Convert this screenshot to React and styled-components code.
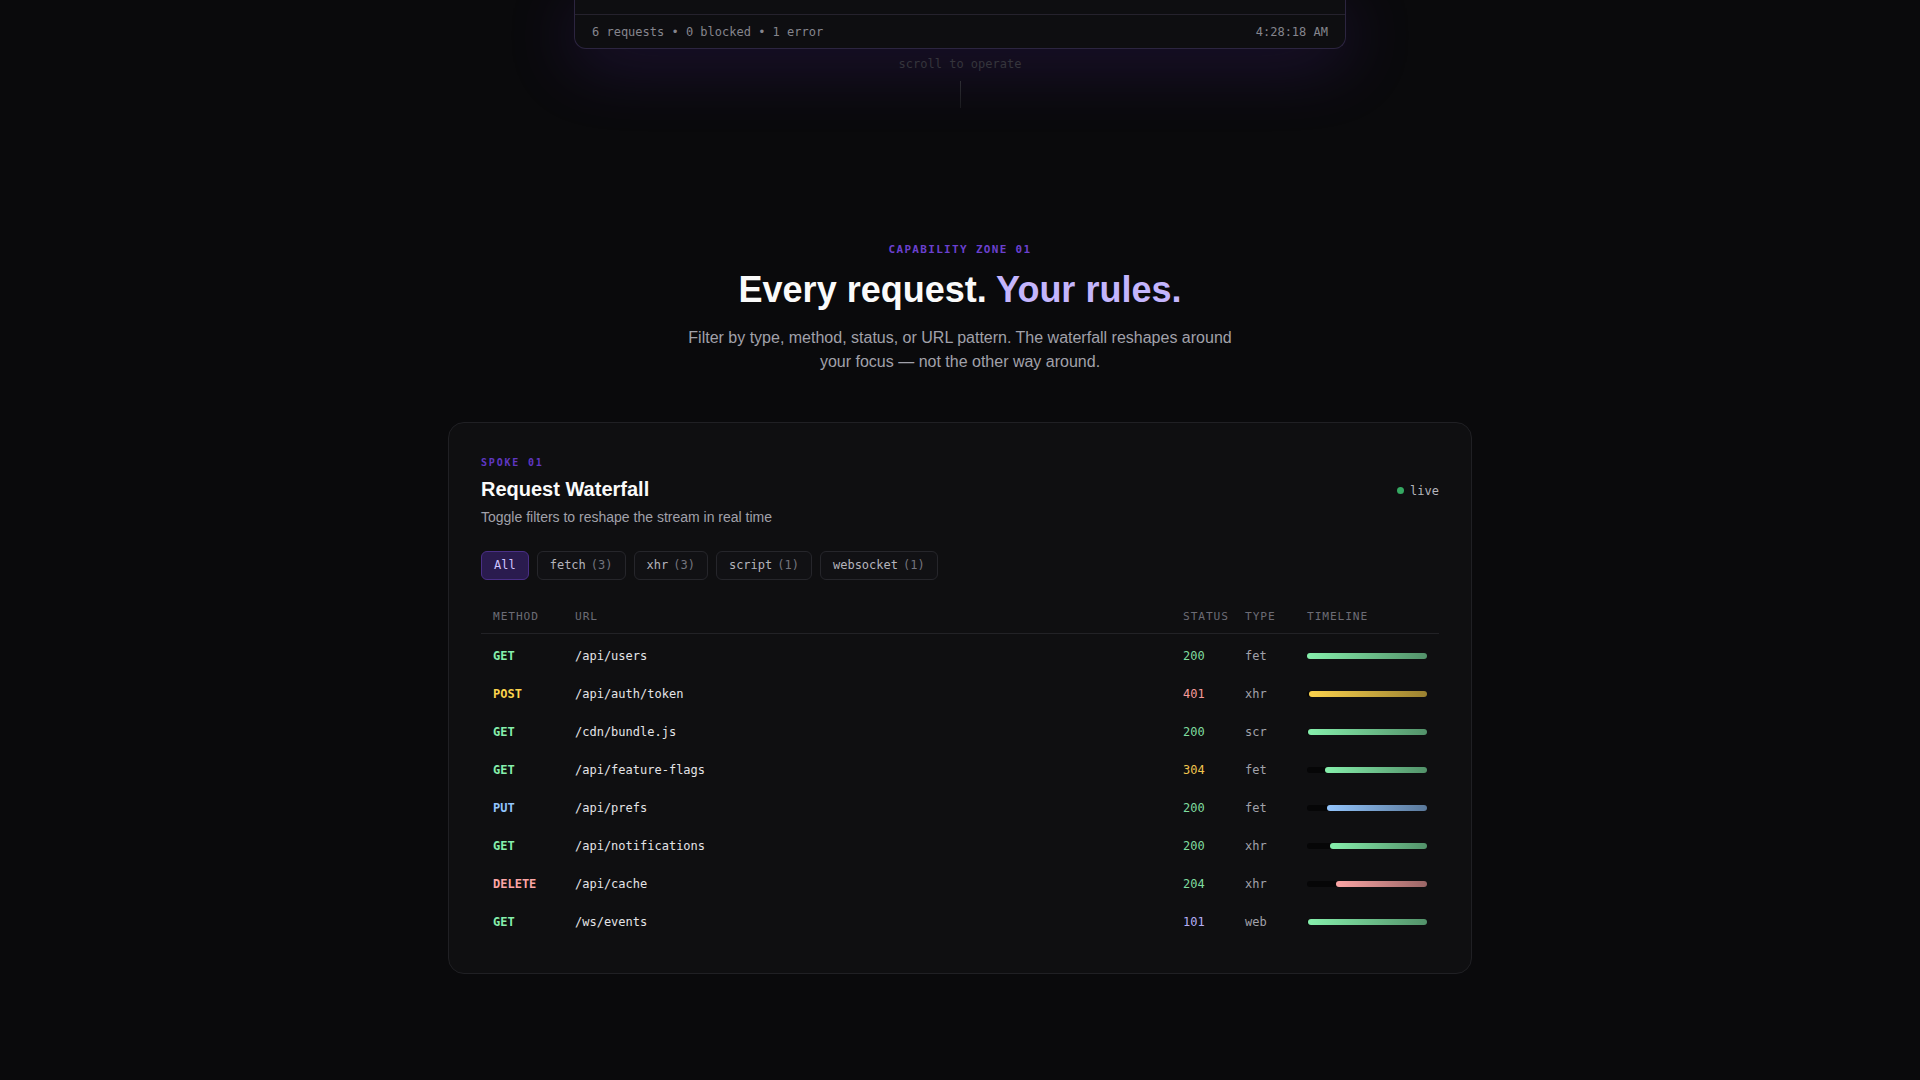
import React from 'react'
import styled, { createGlobalStyle } from 'styled-components'

const mono = `"DejaVu Sans Mono", "Liberation Mono", monospace`
const sans = `"Liberation Sans", Arial, sans-serif`

const methodColors = {
    GET: '#86efac',
    POST: '#fcd34d',
    PUT: '#93c5fd',
    DELETE: '#fca5a5',
}

const statusColor = (code) => {
    if (code >= 400) return '#f59a9a'
    if (code >= 300) return '#f1c54e'
    if (code >= 200) return '#7fdc9f'
    return '#b4aef5'
}

const requests = [
    { method: 'GET', url: '/api/users', status: 200, type: 'fet', start: 0 },
    { method: 'POST', url: '/api/auth/token', status: 401, type: 'xhr', start: 1.6 },
    { method: 'GET', url: '/cdn/bundle.js', status: 200, type: 'scr', start: 0.8 },
    { method: 'GET', url: '/api/feature-flags', status: 304, type: 'fet', start: 15 },
    { method: 'PUT', url: '/api/prefs', status: 200, type: 'fet', start: 17 },
    { method: 'GET', url: '/api/notifications', status: 200, type: 'xhr', start: 19.5 },
    { method: 'DELETE', url: '/api/cache', status: 204, type: 'xhr', start: 24 },
    { method: 'GET', url: '/ws/events', status: 101, type: 'web', start: 0.8 },
]

const filters = [
    { label: 'All', active: true },
    { label: 'fetch', count: 3 },
    { label: 'xhr', count: 3 },
    { label: 'script', count: 1 },
    { label: 'websocket', count: 1 },
]

// capability zone section under the console preview
function App() {
    return (
        <>
            <GlobalStyle />
            <Page>
                <Console>
                    <ConsoleBody />
                    <ConsoleFooter>
                        <span>6 requests • 0 blocked • 1 error</span>
                        <span>4:28:18 AM</span>
                    </ConsoleFooter>
                </Console>
                <ScrollHint>scroll to operate</ScrollHint>
                <ScrollLine />

                <Eyebrow>CAPABILITY ZONE 01</Eyebrow>
                <Heading>
                    Every request. <Accent>Your rules.</Accent>
                </Heading>
                <Lead>
                    Filter by type, method, status, or URL pattern. The waterfall reshapes around
                    your focus — not the other way around.
                </Lead>

                <Card>
                    <CardHeader>
                        <div>
                            <Spoke>SPOKE 01</Spoke>
                            <CardTitle>Request Waterfall</CardTitle>
                            <CardText>Toggle filters to reshape the stream in real time</CardText>
                        </div>
                        <Live>
                            <Dot />
                            live
                        </Live>
                    </CardHeader>

                    <Chips>
                        {filters.map((f) => (
                            <Chip key={f.label} $active={f.active}>
                                {f.label}
                                {f.count !== undefined && <Count>({f.count})</Count>}
                            </Chip>
                        ))}
                    </Chips>

                    <Table>
                        <HeadRow>
                            <span>Method</span>
                            <span>URL</span>
                            <span>Status</span>
                            <span>Type</span>
                            <span>Timeline</span>
                        </HeadRow>
                        <Body>
                            {requests.map((r) => (
                                <Row key={r.url}>
                                    <Method $color={methodColors[r.method]}>{r.method}</Method>
                                    <Url>{r.url}</Url>
                                    <Status $color={statusColor(r.status)}>{r.status}</Status>
                                    <Type>{r.type}</Type>
                                    <Track>
                                        <Bar
                                            $color={methodColors[r.method]}
                                            style={{ marginLeft: `${r.start}%` }}
                                        />
                                    </Track>
                                </Row>
                            ))}
                        </Body>
                    </Table>
                </Card>
            </Page>
        </>
    )
}

const GlobalStyle = createGlobalStyle`
    html, body {
        margin: 0;
        background: #0a0a0c;
    }
    body {
        font-family: ${sans};
        color: #fafafa;
        min-height: 100vh;
    }
`;

const Page = styled.main`
    display: flex;
    flex-direction: column;
    align-items: center;
    min-height: 100vh;
    padding-bottom: 108px;
    box-sizing: border-box;
`;

const Console = styled.section`
    width: 770px;
    background: #0e0e11;
    border: 1px solid #2c2540;
    border-top: none;
    border-radius: 0 0 12px 12px;
    box-shadow: 0 12px 70px rgba(110, 50, 220, 0.22);
`;

const ConsoleBody = styled.div`
    height: 14px;
`;

const ConsoleFooter = styled.footer`
    display: flex;
    justify-content: space-between;
    align-items: center;
    height: 33px;
    padding: 0 17px;
    border-top: 1px solid #25222d;
    font-family: ${mono};
    font-size: 12px;
    color: #85858d;
`;

const ScrollHint = styled.div`
    margin-top: 7px;
    font-family: ${mono};
    font-size: 12px;
    line-height: 16px;
    color: #35353c;
`;

const ScrollLine = styled.div`
    width: 1px;
    height: 27px;
    margin-top: 9px;
    background: linear-gradient(#2e2e34, #1a1a1e);
`;

const Eyebrow = styled.div`
    margin-top: 135px;
    font-family: ${mono};
    font-size: 11px;
    font-weight: 700;
    line-height: 14px;
    letter-spacing: 0.12em;
    color: #6a40cf;
`;

const Heading = styled.h1`
    margin: 11px 0 0;
    font-size: 36px;
    line-height: 43px;
    font-weight: 700;
    color: #fafafa;
`;

const Accent = styled.span`
    color: #c4b5fd;
`;

const Lead = styled.p`
    margin: 15px 0 0;
    max-width: 560px;
    text-align: center;
    font-size: 16px;
    line-height: 24px;
    color: #a1a1aa;
`;

const Card = styled.section`
    width: 1024px;
    box-sizing: border-box;
    margin-top: 48px;
    padding: 33px 32px 32px;
    background: #0f0f11;
    border: 1px solid #202024;
    border-radius: 16px;
`;

const CardHeader = styled.header`
    display: flex;
    justify-content: space-between;
    align-items: center;
`;

const Spoke = styled.div`
    font-family: ${mono};
    font-size: 10px;
    font-weight: 700;
    line-height: 14px;
    letter-spacing: 0.18em;
    color: #5f37c2;
`;

const CardTitle = styled.h2`
    margin: 6px 0 0;
    font-size: 20px;
    line-height: 26px;
    font-weight: 700;
    color: #fafafa;
`;

const CardText = styled.p`
    margin: 5px 0 0;
    font-size: 14px;
    line-height: 20px;
    color: #a1a1aa;
`;

const Live = styled.div`
    display: flex;
    align-items: center;
    gap: 6px;
    margin-bottom: 2px;
    font-family: ${mono};
    font-size: 12px;
    color: #b4b4bc;
`;

const Dot = styled.span`
    width: 7px;
    height: 7px;
    border-radius: 50%;
    background: #35a862;
`;

const Chips = styled.div`
    display: flex;
    gap: 8px;
    margin-top: 24px;
`;

const Chip = styled.button`
    display: flex;
    gap: 5px;
    padding: 6px 12px;
    border-radius: 6px;
    font-family: ${mono};
    font-size: 12px;
    line-height: 15px;
    cursor: pointer;
    border: 1px solid ${(p) => (p.$active ? '#4a2f86' : '#26262b')};
    background: ${(p) => (p.$active ? '#2a1b4e' : '#111114')};
    color: ${(p) => (p.$active ? '#d0c4ff' : '#b4b4bc')};
`;

const Count = styled.span`
    color: #74747d;
`;

const Table = styled.div`
    margin-top: 20px;
`;

const columns = `82px 1fr 62px 62px 120px`;

const HeadRow = styled.div`
    display: grid;
    grid-template-columns: ${columns};
    padding: 9px 12px 8px;
    border-bottom: 1px solid #222226;
    font-family: ${mono};
    font-size: 11.2px;
    line-height: 16px;
    letter-spacing: 0.08em;
    text-transform: uppercase;
    color: #6c6c75;
`;

const Body = styled.div`
    padding-top: 3px;
`;

const Row = styled.div`
    display: grid;
    grid-template-columns: ${columns};
    align-items: center;
    height: 38px;
    padding: 0 12px;
    font-family: ${mono};
    font-size: 12px;
`;

const Method = styled.span`
    font-weight: 700;
    color: ${(p) => p.$color};
`;

const Url = styled.span`
    color: #e4e4e7;
`;

const Status = styled.span`
    color: ${(p) => p.$color};
`;

const Type = styled.span`
    color: #a1a1aa;
`;

const Track = styled.div`
    display: flex;
    height: 6px;
    border-radius: 3px;
    background: #060607;
`;

const Bar = styled.div`
    flex: 1;
    border-radius: 3px;
    background: linear-gradient(90deg, ${(p) => p.$color}, ${(p) => p.$color}99);
`;

export default App
